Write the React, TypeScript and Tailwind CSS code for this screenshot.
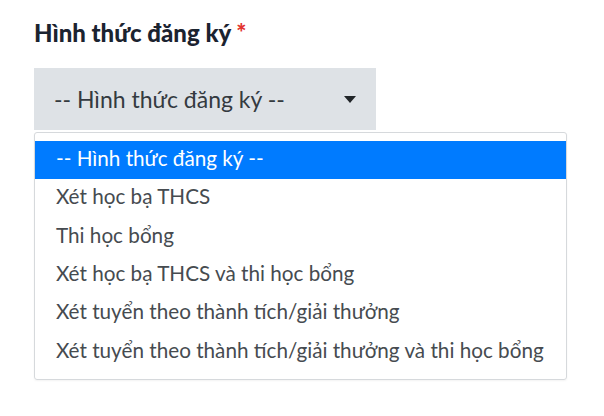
import React from 'react';

const options = [
  '-- Hình thức đăng ký --',
  'Xét học bạ THCS',
  'Thi học bổng',
  'Xét học bạ THCS và thi học bổng',
  'Xét tuyển theo thành tích/giải thưởng',
  'Xét tuyển theo thành tích/giải thưởng và thi học bổng',
];

const App: React.FC = () => {
  return (
    <div className="w-[604px] h-[416px] bg-white pl-[34px] pt-[18px] font-['Lato','Liberation_Sans',sans-serif]">
      {/* Label */}
      <label className="block text-[24px] leading-[30px] font-black text-[#1b2330]">
        Hình thức đăng ký <span className="text-[#e3342f]">*</span>
      </label>

      {/* Select */}
      <div className="mt-[20px] w-[342px] h-[62px] bg-[#dee2e6] flex items-center justify-between pl-[20px] pr-[20px]">
        <span className="text-[23px] text-[#343a40]">-- Hình thức đăng ký --</span>
        <svg width="12" height="7" viewBox="0 0 12 7" className="text-[#212529]">
          <path d="M0 0h12L6 7z" fill="currentColor" />
        </svg>
      </div>

      {/* Dropdown list */}
      <div className="mt-[2px] w-[533px] border border-[#d6d9dc] rounded-[3px] py-[8px] shadow-[0_1px_2px_rgba(0,0,0,0.05)]">
        {options.map((opt, i) => (
          <div
            key={opt}
            className={`h-[38.3px] flex items-center pl-[21px] pb-[3px] text-[20.7px] ${
              i === 0 ? 'bg-[#007bff] text-white' : 'text-[#464b50]'
            }`}
          >
            {opt}
          </div>
        ))}
      </div>
    </div>
  );
};

export default App;
